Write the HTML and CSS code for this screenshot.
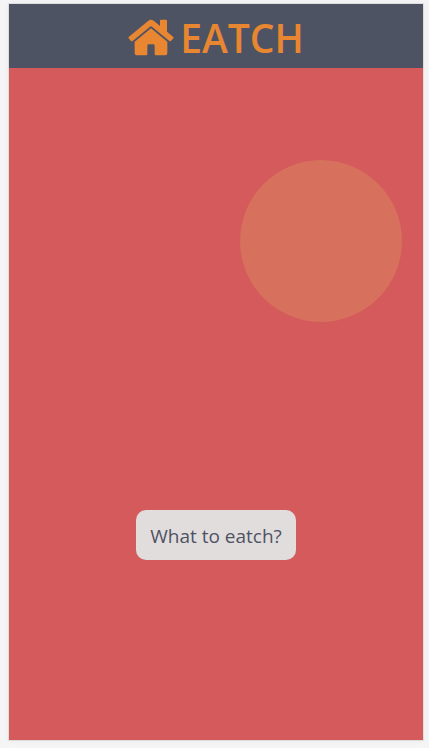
FILE: index.html
```html
<!DOCTYPE html>
<html lang="en">
<head>
<meta charset="utf-8">
<meta name="viewport" content="width=device-width, initial-scale=1">
<title>Eatch</title>
<link rel="stylesheet" href="styles.css">
</head>
<body>
<div class="app">
  <header class="header">
    <a class="brand" href="#">
      <svg class="brand-icon" viewBox="0 0 138 111" aria-hidden="true">
        <path d="M3 53 L61 5 Q69 -1 77 5 L96 21 V5 Q96 2 99 2 H114 Q117 2 117 5 V38 L135 53 Q138 56 136 58 L129 66 Q127 68 124 66 L72 23 Q69 21 66 23 L14 66 Q11 68 9 66 L2 58 Q0 56 3 53 Z"/>
        <path d="M69 28 L118 68 V103 Q118 109 112 109 H84 Q80 109 80 105 V80 Q80 76 76 76 H62 Q58 76 58 80 V105 Q58 109 54 109 H26 Q20 109 20 103 V68 Z"/>
      </svg>
      <span>EATCH</span>
    </a>
  </header>
  <main class="main">
    <div class="bubble"></div>
    <button class="cta" type="button">What to eatch?</button>
  </main>
</div>
</body>
</html>
```
FILE: styles.css
```css
* {
  box-sizing: border-box;
}

body {
  margin: 0;
  min-height: 100vh;
  padding: 4px 6px 8px 9px;
  display: flex;
  background: #f5f5f5;
  font-family: "Segoe UI", "Open Sans", "Noto Sans", sans-serif;
}

.app {
  flex: 1;
  display: flex;
  flex-direction: column;
  background: #d45a5b;
  box-shadow: 0 0 0 1px #dedede, 0 0 8px rgba(0, 0, 0, 0.05);
}

.header {
  display: flex;
  justify-content: center;
  align-items: center;
  height: 64px;
  padding-top: 4px;
  background: #4e5364;
}

.brand {
  display: flex;
  align-items: center;
  gap: 6px;
  color: #e88632;
  font-size: 39px;
  font-weight: 600;
  line-height: 48px;
  text-decoration: none;
}

.brand-icon {
  width: 46px;
  height: 37px;
  margin-bottom: 2px;
  fill: currentColor;
}

.main {
  flex: 1;
  display: flex;
  flex-direction: column;
  align-items: center;
  padding: 92px 21px 0;
}

.bubble {
  align-self: flex-end;
  width: 162px;
  height: 162px;
  border-radius: 50%;
  background: #d7705c;
}

.cta {
  margin-top: 188px;
  padding: 2px 14px 0;
  height: 50px;
  border: 0;
  border-radius: 10px;
  background: #e2dddd;
  color: #4e5364;
  font-family: inherit;
  font-size: 19px;
}
```
